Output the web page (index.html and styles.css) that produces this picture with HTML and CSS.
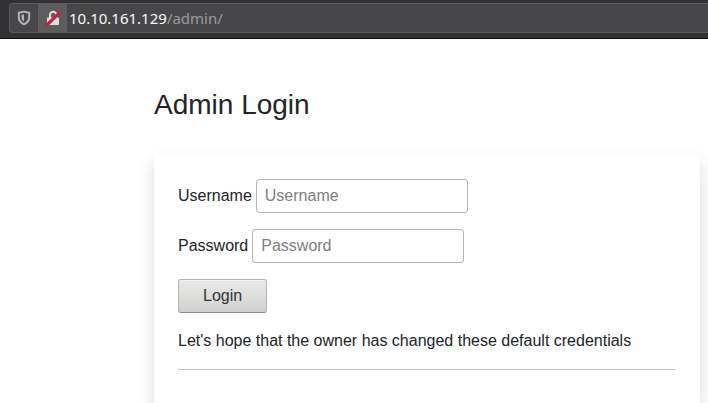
FILE: index.html
```html
<!DOCTYPE html>
<html lang="en">
<head>
	<meta charset="UTF-8">
	<title>Admin Login</title>
	<link rel="stylesheet" href="styles.css">
</head>
<body>
	<header class="toolbar">
		<div class="urlbar">
			<button type="button" class="shield" aria-label="Tracking protection">
				<svg width="14" height="16" viewBox="0 0 14 16">
					<path d="M7 1.600 12.200 2.800v4.500c0 3-1.900 5.500-5.200 7-3.300-1.500-5.200-4-5.200-7V2.800z" fill="none" stroke="#b4b4b5" stroke-width="2" stroke-linejoin="round"/>
					<path d="M7 4.300v7.200c-1.700-1-2.500-2.500-2.500-4.300V4.900z" fill="#b4b4b5"/>
				</svg>
			</button>
			<button type="button" class="lock" aria-label="Connection is not secure">
				<svg width="16" height="16" viewBox="0 0 16 16">
					<path d="M5 8V5a3.200 3.200 0 0 1 6.400 0v3" fill="none" stroke="#dedede" stroke-width="2"/>
					<rect x="2" y="7.500" width="12" height="7.500" rx="1" fill="#dedede"/>
					<path d="M1.800 15.800 15.400 2.700" stroke="#5d5d5e" stroke-width="2.500"/>
					<path d="M1.500 14.500 14.300 2.200" stroke="#ff0039" stroke-width="2" stroke-linecap="round"/>
				</svg>
			</button>
			<div class="address" role="textbox" aria-label="Address" contenteditable="true" spellcheck="false"><span class="host">10.10.161.129</span>/admin/</div>
		</div>
	</header>
	<main class="content">
		<h1>Admin Login</h1>
		<section class="card">
			<form>
				<div class="row">
					<label for="username">Username</label>
					<input type="text" id="username" placeholder="Username">
				</div>
				<div class="row">
					<label for="password">Password</label>
					<input type="password" id="password" placeholder="Password">
				</div>
				<button type="button" class="login">Login</button>
			</form>
			<p>Let's hope that the owner has changed these default credentials</p>
			<hr>
		</section>
	</main>
</body>
</html>
```

FILE: styles.css
```css
*{box-sizing:border-box;}
html{height:100%;}
body{display:flex;flex-direction:column;min-height:100%;margin:0;font:16px/24px "Liberation Sans",Arial,sans-serif;color:#212529;background-color:#fff;}

.toolbar{height:39px;padding:3px 0 0 9px;border-bottom:1px solid #0c0c0d;background-color:#323234;overflow:hidden;}
.urlbar{display:flex;height:30px;border:1px solid #5c5c5e;border-right:0;border-radius:4px 0 0 4px;background-color:#474749;overflow:hidden;}
.urlbar button{display:flex;align-items:center;justify-content:center;padding:0;border:0;background:none;}
.urlbar .shield{width:29px;border-right:1px solid #59606a;}
.urlbar .lock{width:28px;background-color:#5d5d5e;}
.address{flex:1;padding-left:2px;font:15px/28px "Noto Sans","Open Sans",sans-serif;color:#9b9b9c;white-space:nowrap;outline:0;}
.address .host{color:#f9f9fa;}

.content{flex:1;display:flex;flex-direction:column;padding:48px 8px 0 154px;}
h1{margin:0 0 32px;font-size:28px;line-height:36px;font-weight:400;}

.card{flex:1;padding:24px;background-color:#fff;box-shadow:0 8px 16px rgba(0,0,0,.15);}
.row{display:flex;align-items:center;gap:4px;margin-bottom:16px;}
.row input{width:212px;height:34px;padding:0 8px;border:1px solid #b4b4b4;border-radius:3px;font:inherit;color:inherit;background-color:#fff;}
.row input::placeholder{color:#808080;opacity:1;}
.login{display:block;height:34px;padding:0 24px;border:1px solid #b4b4b2;border-bottom-color:#8c8c8a;border-radius:3px;font:inherit;color:#2e3436;background:linear-gradient(#e8e8e7,#dededd 50%,#cfcfcd);box-shadow:inset 0 1px #f4f4f3;}
.card p{margin:16px 0;}
.card hr{margin:0;border:0;border-top:1px solid #c4c4c4;}
```
